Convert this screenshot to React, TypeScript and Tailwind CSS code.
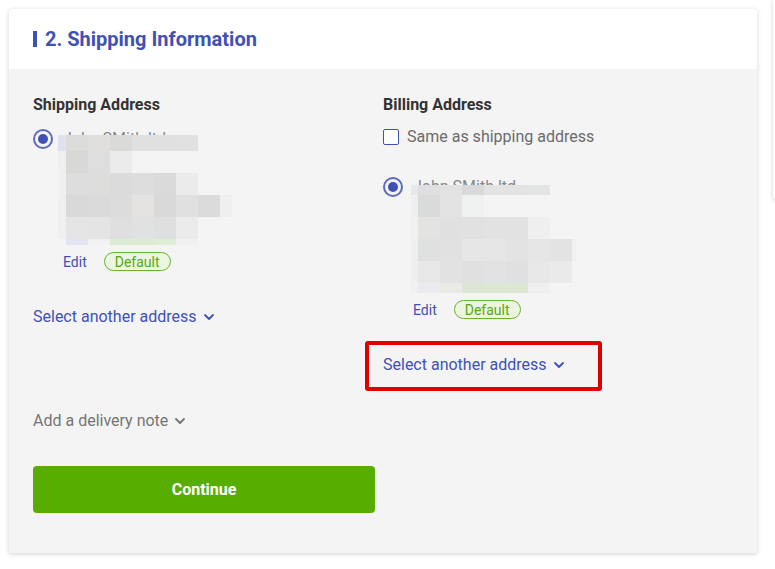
import { ChevronDown } from "lucide-react";

const BG = "#f4f4f4";

// blurred address blocks (redacted in the screenshot)
const leftMosaic = {
  cols: [8, 22, 22, 22, 22, 22, 22, 22, 12],
  rows: [16, 22, 22, 22, 22, 6],
  cells: [
    ["#dfe1ee", "#dcdcda", "#e0dfdd", "#dadad8", "#e0e0e0", "#e0e0e0", "#e1e1e1", BG, BG],
    ["#efefee", "#d8d8d6", "#dedede", "#ebebeb", BG, BG, BG, BG, BG],
    ["#f0f0f0", "#dcdddc", "#dddddb", "#dbdbdb", "#dddddd", "#dadada", "#ebebeb", BG, BG],
    ["#efefef", "#d9d9d9", "#dadada", "#dcdcdc", "#e5e3e2", "#d9d9d9", "#e0e0e0", "#dbdbdb", "#efefef"],
    ["#efefef", "#e4e5e4", "#e4e4e4", "#dfdfdf", "#e0e2e2", "#dfdfdf", "#ebebeb", BG, BG],
    [BG, "#e2e4ef", "#f2f2f2", "#dcebd3", "#dcebd3", "#dfecd6", "#f0f0f0", BG, BG],
  ],
};

const rightMosaic = {
  cols: [7, 22, 22, 22, 22, 22, 22, 22, 4],
  rows: [10, 22, 22, 22, 22, 10],
  cells: [
    ["#e6e6ee", "#dfdfdf", "#e2e2e2", "#d9d9d9", "#e3e3e3", "#e3e3e3", "#e3e5e5", BG, BG],
    ["#efefed", "#d9dbdb", "#e3e3e3", "#eff1f1", BG, BG, BG, BG, BG],
    ["#f0f0ee", "#e3e3e1", "#e0e0e0", "#e1e1e1", "#e2e2e2", "#e2e2e2", "#efefef", BG, BG],
    ["#efefef", "#dfe1e1", "#e1e1e1", "#e6e6e6", "#e6e6e6", "#e3e3e3", "#e6e6e6", "#e3e3e3", "#f0f0f0"],
    ["#efefef", "#e7e7e7", "#e2e2e2", "#e0e0e0", "#e2e2e2", "#e0e0e0", "#e8e8e8", "#eaeaea", BG],
    ["#f0f0f0", "#e9ebee", "#eaebe6", "#dde6d5", "#dee6d4", "#dee6d4", "#efefef", BG, BG],
  ],
};

type Mosaic = typeof leftMosaic;

function Blur({ m, className }: { m: Mosaic; className: string }) {
  return (
    <div className={`absolute flex flex-col ${className}`}>
      {m.rows.map((h, r) => (
        <div key={r} className="flex">
          {m.cols.map((w, c) => (
            <div key={c} style={{ width: w, height: h, backgroundColor: m.cells[r][c] }} />
          ))}
        </div>
      ))}
    </div>
  );
}

function Radio() {
  return (
    <div className="w-5 h-5 shrink-0 rounded-full border-2 border-[#5c6bc0] flex items-center justify-center">
      <div className="w-[10px] h-[10px] rounded-full bg-[#3f51b5]" />
    </div>
  );
}

function AddressOption({ m, blurPos }: { m: Mosaic; blurPos: string }) {
  return (
    <div className="flex gap-[10px]">
      <Radio />
      <div className="flex flex-col">
        <div className="relative h-[118px]">
          <div className="text-base leading-5 text-[#888]">John SMith ltd</div>
          <Blur m={m} className={blurPos} />
        </div>
        <div className="flex items-center gap-[17px] mt-[5px] h-[19px] text-sm">
          <span className="text-[#3f51b5]">Edit</span>
          <span className="h-[19px] px-[10px] flex items-center rounded-full border border-[#6ab42a] bg-[#ebf6de] text-[#58a816]">
            Default
          </span>
        </div>
      </div>
    </div>
  );
}

function SelectAnother() {
  return (
    <div className="flex items-center gap-[4px] text-base leading-5 text-[#3f51b5]">
      Select another address
      <ChevronDown size={16} strokeWidth={2.75} />
    </div>
  );
}

export default function App() {
  return (
    <div
      className="w-[775px] h-[569px] bg-white flex overflow-hidden"
      style={{ fontFamily: "Roboto, 'Liberation Sans', sans-serif" }}
    >
      <div className="ml-[9px] mt-[9px] shrink-0 w-[748px] h-[544px] rounded-t-[4px] overflow-hidden bg-[#f4f4f4] shadow-[0_1px_5px_rgba(0,0,0,0.18)] flex flex-col">
        <div className="h-[60px] bg-white flex items-center px-6 gap-2">
          <div className="w-1 h-4 bg-[#3f51b5]" />
          <h2 className="text-xl font-bold text-[#3f51b5] leading-6">2. Shipping Information</h2>
        </div>

        <div className="px-6 pt-[24px] flex flex-col">
          <div className="grid grid-cols-2">
            <div className="flex flex-col">
              <h3 className="text-base font-bold text-[#333] leading-6">Shipping Address</h3>
              <div className="mt-[12px]">
                <AddressOption m={leftMosaic} blurPos="-left-[5px] top-[6px]" />
              </div>
              <div className="mt-[36px]">
                <SelectAnother />
              </div>
            </div>

            <div className="flex flex-col">
              <h3 className="text-base font-bold text-[#333] leading-6">Billing Address</h3>
              <div className="mt-[12px] flex items-center gap-2 h-4">
                <div className="w-4 h-4 rounded-[2px] border-[1.5px] border-[#3f51b5] bg-white" />
                <span className="text-base text-[#6b6b6b] leading-5">Same as shipping address</span>
              </div>
              <div className="mt-[32px]">
                <AddressOption m={rightMosaic} blurPos="-left-[2px] top-[8px]" />
              </div>
              <div className="mt-[36px] relative">
                <SelectAnother />
                <div className="absolute -left-[18px] -top-[14px] w-[237px] h-[50px] border-4 border-[#e00000] rounded-[3px]" />
              </div>
            </div>
          </div>

          <div className="mt-[36px] flex items-center gap-[4px] text-base leading-5 text-[#757575]">
            Add a delivery note
            <ChevronDown size={16} strokeWidth={2.75} />
          </div>

          <button className="mt-[35px] w-[342px] h-[47px] rounded-[4px] bg-[#57ad00] text-white text-base font-bold">
            Continue
          </button>
        </div>
      </div>

      <div className="ml-4 shrink-0 w-[20px] h-[200px] bg-white rounded-bl-[4px] shadow-[0_1px_5px_rgba(0,0,0,0.18)]" />
    </div>
  );
}
